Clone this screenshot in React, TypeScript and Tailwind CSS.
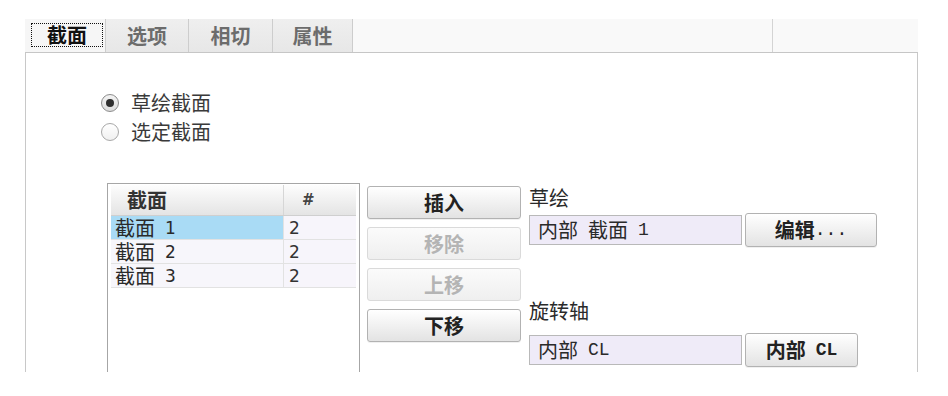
import React from "react";

const cjk = "font-['Noto_Sans_CJK_SC',sans-serif]";
const mono = "font-['Liberation_Mono','Noto_Sans_CJK_SC',monospace]";

function Radio({ checked, label }: { checked?: boolean; label: string }) {
  return (
    <div className="flex items-center h-[29px]">
      <div
        className={
          "w-[18px] h-[18px] rounded-full border flex items-center justify-center " +
          (checked
            ? "border-[#8c8c8c] bg-linear-to-b from-[#f4f4f4] to-[#dcdcdc]"
            : "border-[#a8a8a8] bg-linear-to-b from-white to-[#f0f0f0]")
        }
      >
        {checked && <div className="w-[8px] h-[8px] rounded-full bg-[#2e2e2e]" />}
      </div>
      <span className="ml-[12px] text-[20px] leading-[20px] text-[#3a3a3a]">{label}</span>
    </div>
  );
}

function Btn({ children, disabled, w }: { children: React.ReactNode; disabled?: boolean; w: string }) {
  return (
    <div
      className={
        w +
        " flex items-center justify-center rounded-[3px] border font-bold text-[20px] leading-[20px] " +
        (disabled
          ? "border-[#dadada] bg-linear-to-b from-[#fbfbfb] to-[#efefef] text-[#b4b4b4]"
          : "border-[#b2b2b2] bg-linear-to-b from-white to-[#e3e3e3] text-[#222] shadow-[0_1px_0_rgba(0,0,0,0.06)]")
      }
    >
      {children}
    </div>
  );
}

function Row({ n, selected }: { n: string; selected?: boolean }) {
  return (
    <div className="flex h-[24px] border-b border-[#e2e2e2]">
      <div
        className={
          "w-[173px] border-r border-[#e2e2e2] pl-[4px] flex items-center text-[20px] leading-[20px] text-[#2a2a2a] " +
          (selected ? "bg-[#a9dbf5]" : "bg-[#f7f6fb]")
        }
      >
        <span>截面</span>
        <span className="ml-[10px] text-[17px] font-['DejaVu_Sans',sans-serif]">{n}</span>
      </div>
      <div className="w-[72px] bg-[#f7f5fb] pl-[5px] flex items-center text-[17px] leading-[20px] text-[#333] font-['DejaVu_Sans',sans-serif]">
        2
      </div>
    </div>
  );
}

export default function App() {
  return (
    <div className={"w-[948px] h-[396px] bg-white overflow-hidden " + cjk}>
      <div className="pt-[19px] pl-[25px]">
        {/* Tab bar */}
        <div className="flex h-[34px] w-[893px] border-b border-[#c6c6c6]">
          <div className="w-[81px] border-r border-[#cdcdcd] bg-[#f6f6f6] pt-[4px] pl-[6px]">
            <div className="w-[72px] h-[24px] border border-dotted border-[#111] flex items-center justify-center text-[20px] leading-[20px] font-bold text-[#111]">
              截面
            </div>
          </div>
          <div className="w-[83px] border-r border-[#cdcdcd] bg-linear-to-b from-[#efefef] to-[#e7e7e7] flex items-center justify-center text-[20px] leading-[20px] font-bold text-[#6c6c6c]">
            选项
          </div>
          <div className="w-[84px] border-r border-[#cdcdcd] bg-linear-to-b from-[#efefef] to-[#e7e7e7] flex items-center justify-center text-[20px] leading-[20px] font-bold text-[#6c6c6c]">
            相切
          </div>
          <div className="w-[80px] border-r border-[#cdcdcd] bg-linear-to-b from-[#efefef] to-[#e7e7e7] flex items-center justify-center text-[20px] leading-[20px] font-bold text-[#6c6c6c]">
            属性
          </div>
          <div className="w-[420px] border-r border-[#d4d4d4] bg-[#f9f9f9]" />
          <div className="w-[145px] bg-[#f9f9f9]" />
        </div>

        {/* Panel */}
        <div className="w-[893px] h-[319px] border-x border-[#c8c8c8] bg-white">
          <div className="pt-[35px] pl-[75px]">
            <Radio checked label="草绘截面" />
            <Radio label="选定截面" />
          </div>

          <div className="flex items-start mt-[37px]">
            {/* Table */}
            <div className="ml-[81px] w-[253px] h-[189px] border-x border-t border-[#a6a6a6] px-[3px] pt-[1px] bg-white">
              <div className="flex h-[31px] border-b border-[#cfcfcf] bg-linear-to-b from-[#fdfdfd] to-[#e4e4e4]">
                <div className="w-[173px] border-r border-[#d6d6d6] pl-[16px] flex items-center text-[20px] leading-[20px] font-bold text-[#333]">
                  截面
                </div>
                <div className="w-[72px] pl-[18px] flex items-center text-[15px] leading-[20px] font-bold text-[#444] font-['DejaVu_Sans',sans-serif]">
                  #
                </div>
              </div>
              <Row n="1" selected />
              <Row n="2" />
              <Row n="3" />
            </div>

            {/* Buttons */}
            <div className="ml-[7px] mt-[3px] flex flex-col gap-[8px]">
              <Btn w="w-[154px] h-[33px]">插入</Btn>
              <Btn w="w-[154px] h-[33px]" disabled>移除</Btn>
              <Btn w="w-[154px] h-[33px]" disabled>上移</Btn>
              <Btn w="w-[154px] h-[33px]">下移</Btn>
            </div>

            {/* Right column */}
            <div className="ml-[8px] flex flex-col">
              <div className="mt-[5px] text-[20px] leading-[20px] text-[#2a2a2a]">草绘</div>
              <div className="mt-[5px] flex items-center gap-[3px]">
                <div className="w-[213px] h-[30px] border border-[#b9b9b9] bg-[#efebf8] pl-[8px] flex items-center text-[20px] leading-[20px] text-[#2a2a2a]">
                  <span>内部</span>
                  <span className="ml-[10px]">截面</span>
                  <span className={"ml-[10px] text-[18px] " + mono}>1</span>
                </div>
                <Btn w="w-[132px] h-[34px]">
                  <span>编辑</span>
                  <span className={"text-[18px] font-normal " + mono}>...</span>
                </Btn>
              </div>
              <div className="mt-[54px] text-[20px] leading-[20px] text-[#2a2a2a]">旋转轴</div>
              <div className="mt-[12px] flex items-center gap-[3px]">
                <div className="w-[213px] h-[30px] border border-[#b9b9b9] bg-[#efebf8] pl-[8px] flex items-center text-[20px] leading-[20px] text-[#2a2a2a]">
                  <span>内部</span>
                  <span className={"ml-[10px] text-[18px] " + mono}>CL</span>
                </div>
                <Btn w="w-[113px] h-[34px]">
                  <span>内部</span>
                  <span className={"ml-[10px] text-[18px] " + mono}>CL</span>
                </Btn>
              </div>
            </div>
          </div>
        </div>
      </div>
    </div>
  );
}
